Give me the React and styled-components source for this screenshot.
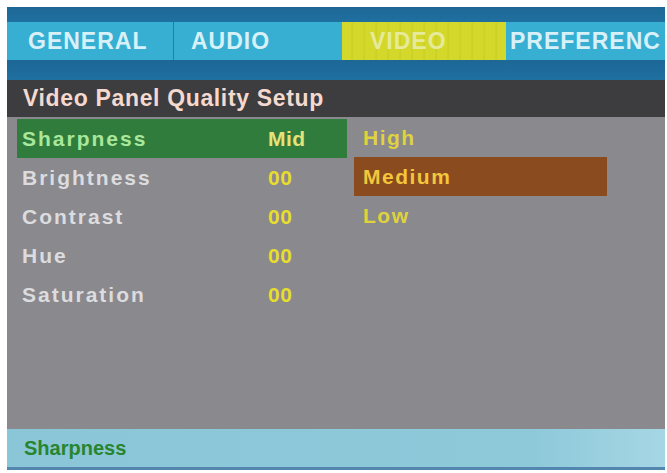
import React from "react";
import styled, { createGlobalStyle } from "styled-components";

const Global = createGlobalStyle`
  html, body { margin: 0; padding: 0; background: #ffffff; }
  body { font-family: "Liberation Sans", Arial, sans-serif; }
`;

const Screen = styled.div`
  margin: 7px 0 0 7px;
  width: 658px;
  display: flex;
  flex-direction: column;
  background: #8a898e;
`;

const DarkStrip = styled.div`
  height: ${(p) => p.$h}px;
  background: linear-gradient(180deg, #1d6796 0%, #1f70a0 100%);
`;

const TabRow = styled.div`
  height: 38px;
  display: flex;
  background: #37afd2;
  overflow: hidden;
`;

const Tab = styled.div`
  width: ${(p) => p.$w}px;
  flex: ${(p) => (p.$w ? "none" : "1")};
  display: flex;
  align-items: center;
  padding-left: ${(p) => p.$pad}px;
  box-sizing: border-box;
  font-weight: bold;
  font-size: 23px;
  letter-spacing: 1px;
  white-space: nowrap;
  color: ${(p) => (p.$active ? "#e6ea9a" : "#d8f1f8")};
  background: ${(p) =>
    p.$active
      ? "repeating-linear-gradient(90deg, #d3d82a 0px, #d3d82a 9px, #c9ce26 10px, #d6da2e 12px)"
      : "transparent"};
  border-right: ${(p) => (p.$divider ? "1px solid #247fa4" : "none")};
`;

const Header = styled.div`
  height: 37px;
  display: flex;
  align-items: center;
  padding-left: 16px;
  background: #3d3c3f;
  color: #f4d9cf;
  font-weight: bold;
  font-size: 23px;
  letter-spacing: 0.65px;
`;

const Body = styled.div`
  height: 312px;
  display: flex;
  gap: 7px;
  background: #8a898e;
`;

const ItemList = styled.div`
  display: flex;
  flex-direction: column;
  padding: 2px 0 0 10px;
`;

const ItemRow = styled.div`
  width: 330px;
  height: 39px;
  display: grid;
  grid-template-columns: 246px 1fr;
  align-items: center;
  padding-left: 5px;
  box-sizing: border-box;
  background: ${(p) => (p.$selected ? "#2f7c3c" : "transparent")};
  font-weight: bold;
  font-size: 21px;
  letter-spacing: 2px;
`;

const Label = styled.span`
  color: ${(p) => (p.$selected ? "#a9e79b" : "#dcdcde")};
`;

const Value = styled.span`
  color: ${(p) => (p.$selected ? "#e6e277" : "#e6dd2c")};
  letter-spacing: 0.5px;
`;

const OptionList = styled.div`
  display: flex;
  flex-direction: column;
  padding-top: 1px;
`;

const Option = styled.div`
  width: 253px;
  height: 39px;
  display: flex;
  align-items: center;
  padding-left: 9px;
  box-sizing: border-box;
  font-weight: bold;
  font-size: 21px;
  letter-spacing: 1.5px;
  background: ${(p) => (p.$selected ? "#8a4b1f" : "transparent")};
  color: ${(p) => (p.$selected ? "#f3c63c" : "#dfd23e")};
`;

const Footer = styled.div`
  height: 38px;
  display: flex;
  align-items: center;
  padding-left: 17px;
  background: linear-gradient(90deg, #8bc6d8 0%, #8ec9da 80%, #a6d6e4 100%);
  border-bottom: 3px solid #5487b0;
  color: #278530;
  font-weight: bold;
  font-size: 20px;
`;

const items = [
  { label: "Sharpness", value: "Mid", selected: true },
  { label: "Brightness", value: "00" },
  { label: "Contrast", value: "00" },
  { label: "Hue", value: "00" },
  { label: "Saturation", value: "00" },
];

const options = [
  { label: "High" },
  { label: "Medium", selected: true },
  { label: "Low" },
];

export default function App() {
  return (
    <>
      <Global />
      <Screen>
        <DarkStrip $h={15} />
        <TabRow>
          <Tab $w={167} $pad={21} $divider>GENERAL</Tab>
          <Tab $w={168} $pad={17}>AUDIO</Tab>
          <Tab $w={164} $pad={28} $active>VIDEO</Tab>
          <Tab $pad={4}>PREFERENC</Tab>
        </TabRow>
        <DarkStrip $h={20} />
        <Header>Video Panel Quality Setup</Header>
        <Body>
          <ItemList>
            {items.map((it) => (
              <ItemRow key={it.label} $selected={it.selected}>
                <Label $selected={it.selected}>{it.label}</Label>
                <Value $selected={it.selected}>{it.value}</Value>
              </ItemRow>
            ))}
          </ItemList>
          <OptionList>
            {options.map((o) => (
              <Option key={o.label} $selected={o.selected}>
                {o.label}
              </Option>
            ))}
          </OptionList>
        </Body>
        <Footer>Sharpness</Footer>
      </Screen>
    </>
  );
}
